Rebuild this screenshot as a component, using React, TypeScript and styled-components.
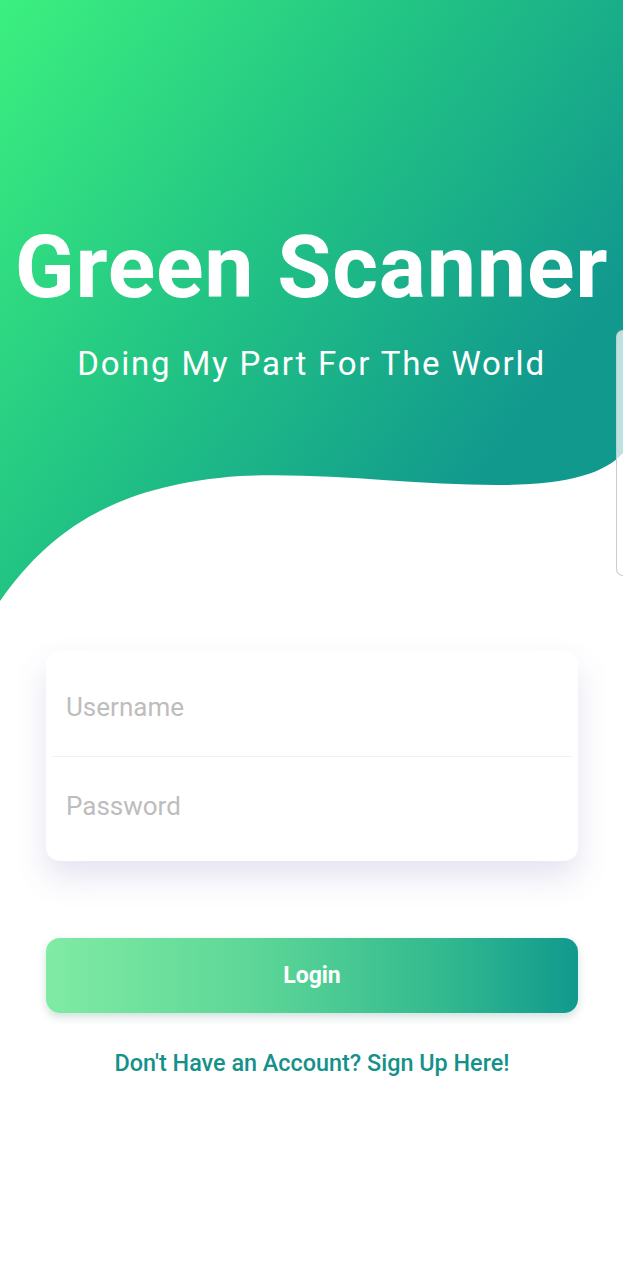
import React from 'react';
import styled, { createGlobalStyle } from 'styled-components';

const GlobalStyle = createGlobalStyle`
  html, body {
    margin: 0;
    padding: 0;
    background: #fff;
    font-family: Roboto, "Noto Sans", sans-serif;
  }
  * {
    box-sizing: border-box;
  }
`;

const Page = styled.div`
  position: relative;
  width: 623px;
  min-height: 1280px;
  overflow: hidden;
  background: #fff;
`;

const Header = styled.header`
  position: relative;
  height: 605px;
  padding-top: 223px;
  display: flex;
  flex-direction: column;
  align-items: center;
  background: linear-gradient(125deg, #3cf07f 0%, #22c484 40%, #11998e 78%);
`;

const Title = styled.h1`
  margin: 0;
  font-size: 88px;
  line-height: 1;
  font-weight: 700;
  letter-spacing: 0.8px;
  color: #fff;
  white-space: nowrap;
`;

const Subtitle = styled.p`
  margin: 36px 0 0;
  font-size: 33px;
  line-height: 1;
  font-weight: 400;
  letter-spacing: 1.8px;
  color: #fff;
`;

const Wave = styled.svg`
  position: absolute;
  left: 0;
  bottom: 0;
  width: 623px;
  height: 170px;
  display: block;
`;

const Form = styled.main`
  display: flex;
  flex-direction: column;
  align-items: center;
  padding: 46px 45px 0 46px;
`;

const Card = styled.div`
  width: 532px;
  background: #fff;
  border-radius: 14px;
  box-shadow: 0 16px 32px rgba(100, 90, 170, 0.17);
  padding: 7px 6px 6px 7px;
`;

const Field = styled.input`
  display: block;
  width: 100%;
  height: 98px;
  border: none;
  outline: none;
  background: transparent;
  padding: 0 13px;
  font-family: Roboto, sans-serif;
  font-size: 26px;
  color: #333;

  &::placeholder {
    color: #bdbdbd;
  }
`;

const Divider = styled.div`
  height: 1px;
  background: #f0eff3;
`;

const LoginButton = styled.button`
  margin-top: 77px;
  width: 532px;
  height: 75px;
  border: none;
  border-radius: 14px;
  background: linear-gradient(90deg, #80eba4 0%, #5cd697 40%, #32b98f 75%, #11998e 100%);
  box-shadow: 0 4px 8px rgba(40, 120, 100, 0.22);
  color: #fff;
  font-family: Roboto, sans-serif;
  font-size: 23px;
  font-weight: 700;
  cursor: pointer;
`;

const SignUp = styled.a`
  margin-top: 37px;
  font-size: 23.4px;
  line-height: 27px;
  font-weight: 500;
  color: #14918a;
  text-decoration: none;
  cursor: pointer;
`;

const EdgeHandle = styled.div`
  position: absolute;
  top: 330px;
  right: 0;
  width: 7px;
  height: 246px;
  border: 1px solid #c9cccc;
  border-right: none;
  border-radius: 8px 0 0 8px;
  background: rgba(255, 255, 255, 0.72);
`;

const App = () => {
  return (
    <Page>
      <GlobalStyle />
      <Header>
        <Title>Green Scanner</Title>
        <Subtitle>Doing My Part For The World</Subtitle>
        <Wave viewBox="0 440 623 170" preserveAspectRatio="none">
          <path
            d="M0,606 C50,535 115,490 240,481 C330,477 420,491 505,490 C570,489 605,478 623,458 L623,612 L0,612 Z"
            fill="#fff"
          />
        </Wave>
      </Header>
      <Form>
        <Card>
          <Field placeholder="Username" />
          <Divider />
          <Field type="password" placeholder="Password" />
        </Card>
        <LoginButton>Login</LoginButton>
        <SignUp>Don't Have an Account? Sign Up Here!</SignUp>
      </Form>
      <EdgeHandle />
    </Page>
  );
};

export default App;
